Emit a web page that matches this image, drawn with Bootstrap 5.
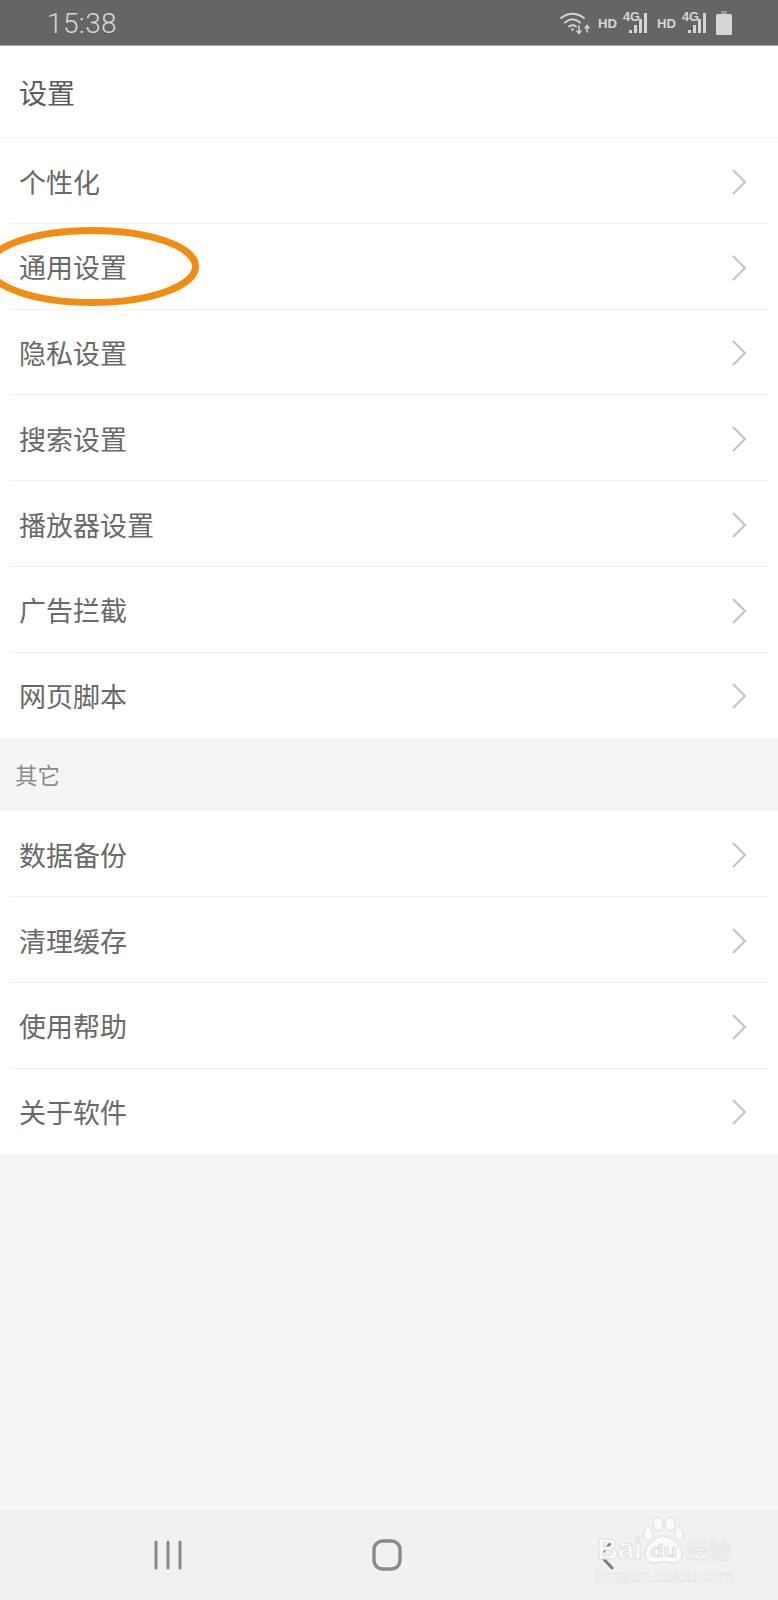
<!DOCTYPE html>
<html lang="zh-CN">
<head>
<meta charset="utf-8">
<title>设置</title>
<link href="https://cdn.jsdelivr.net/npm/bootstrap@5.3.0/dist/css/bootstrap.min.css" rel="stylesheet">
<style>
html,body{height:1600px;margin:0}
body{background:#f5f5f5;font-family:"Noto Sans CJK SC","Liberation Sans",sans-serif;color:#666;width:778px;overflow:hidden;position:relative}
.shell{height:1600px}
.sbar{height:46px;background:#656565;color:#d5d5d5;border-bottom:1px solid #a8a8a8;padding:0 46px 0 47px}
.clock{font-family:Roboto,"Liberation Sans",sans-serif;font-size:28px;font-weight:300;line-height:45px;letter-spacing:.4px;padding-top:2px}
.icons{gap:8px}
.head{height:92px;background:#fff;padding-left:19px;font-size:28px;color:#5c5c5c;border-bottom:1px solid #f5f5f5}
.rows{background:#fff}
.item{height:85.75px;padding:2px 32px 0 19px;font-size:27px;position:relative;color:#696969}
.item+.item::before{content:"";position:absolute;left:9px;right:9px;top:-1px;height:1px;background:#f0f0f0}
.sect{height:73px;padding-left:15px;font-size:22.5px;color:#8c8c8c;background:#f5f5f5}
.grow{flex:1 1 auto}
.navb{height:90px;background:#f1f1f1}
.navgrid{height:90px;padding:0 4px 1px 0}
.cell{width:219px}
.oval{position:absolute;left:-40px;top:226px;width:240px;height:81px;pointer-events:none}
.wm{position:absolute;left:597px;top:1517px;width:140px;height:70px}
.wm1{position:absolute;left:0;top:14px;font-family:"Liberation Sans",sans-serif;font-size:29px;font-weight:700;color:#fafafa;-webkit-text-stroke:.8px #dedede;line-height:36px}
.wm2{position:absolute;left:88px;top:17px;font-size:23px;line-height:30px;color:#fafafa;-webkit-text-stroke:.5px #d8d8d8}
.wm3{position:absolute;left:-2px;top:50px;font-family:"Liberation Sans",sans-serif;font-size:17px;color:#fafafa;-webkit-text-stroke:.4px #d8d8d8;line-height:20px;letter-spacing:.1px;white-space:nowrap}
.paw{position:absolute;left:46px;top:0;width:41px;height:47px}
</style>
</head>
<body>
<div class="shell d-flex flex-column">
  <div class="sbar d-flex justify-content-between align-items-center flex-shrink-0">
    <span class="clock">15:38</span>
    <div class="icons d-flex align-items-center">
      <svg width="30" height="24" viewBox="0 0 30 24" fill="none" stroke="#d5d5d5" stroke-linecap="round">
        <path d="M1 7Q12.500 -1.500 24 7" stroke-width="2"/><path d="M5 11.500Q12.500 5 20 11.500" stroke-width="2"/><path d="M9 15.500Q12.500 13 16 15.500" stroke-width="2"/>
        <circle cx="12.500" cy="18.500" r="1.300" fill="#d5d5d5" stroke="none"/>
        <path d="M19 15v7M17 20l2 2.500 2-2.500M27 21v-6M25 17l2-2.500 2 2.500" stroke-width="1.500"/>
      </svg>
      <svg width="51" height="32" viewBox="0 -4 51 32" fill="#d5d5d5"><text x="0" y="17" font-family="Liberation Sans" font-size="13" font-weight="700" textLength="19" lengthAdjust="spacingAndGlyphs">HD</text><text x="25" y="10" font-family="Liberation Sans" font-size="13" font-weight="700" textLength="17" lengthAdjust="spacingAndGlyphs">4G</text><rect x="31" y="19" width="3" height="3"/><rect x="36" y="14" width="3" height="8"/><rect x="41" y="8" width="3" height="14"/><rect x="46" y="2" width="3" height="20"/></svg>
      <svg width="51" height="32" viewBox="0 -4 51 32" fill="#d5d5d5"><text x="0" y="17" font-family="Liberation Sans" font-size="13" font-weight="700" textLength="19" lengthAdjust="spacingAndGlyphs">HD</text><text x="25" y="10" font-family="Liberation Sans" font-size="13" font-weight="700" textLength="17" lengthAdjust="spacingAndGlyphs">4G</text><rect x="31" y="19" width="3" height="3"/><rect x="36" y="14" width="3" height="8"/><rect x="41" y="8" width="3" height="14"/><rect x="46" y="2" width="3" height="20"/></svg>
      <svg width="16" height="24" viewBox="0 0 16 24"><rect x="5" y="0" width="6" height="4" fill="#9a9a9a"/><rect x="0" y="3" width="16" height="21" rx="1.500" fill="#d5d5d5"/></svg>
    </div>
  </div>
  <div class="head d-flex align-items-center flex-shrink-0">设置</div>
  <div class="rows flex-shrink-0">
    <div class="item d-flex justify-content-between align-items-center"><span>个性化</span><svg width="14" height="26" viewBox="0 0 14 26" fill="none" stroke="#c4c4c4" stroke-width="2"><path d="M1 1l12 12L1 25"/></svg></div>
    <div class="item d-flex justify-content-between align-items-center"><span>通用设置</span><svg width="14" height="26" viewBox="0 0 14 26" fill="none" stroke="#c4c4c4" stroke-width="2"><path d="M1 1l12 12L1 25"/></svg></div>
    <div class="item d-flex justify-content-between align-items-center"><span>隐私设置</span><svg width="14" height="26" viewBox="0 0 14 26" fill="none" stroke="#c4c4c4" stroke-width="2"><path d="M1 1l12 12L1 25"/></svg></div>
    <div class="item d-flex justify-content-between align-items-center"><span>搜索设置</span><svg width="14" height="26" viewBox="0 0 14 26" fill="none" stroke="#c4c4c4" stroke-width="2"><path d="M1 1l12 12L1 25"/></svg></div>
    <div class="item d-flex justify-content-between align-items-center"><span>播放器设置</span><svg width="14" height="26" viewBox="0 0 14 26" fill="none" stroke="#c4c4c4" stroke-width="2"><path d="M1 1l12 12L1 25"/></svg></div>
    <div class="item d-flex justify-content-between align-items-center"><span>广告拦截</span><svg width="14" height="26" viewBox="0 0 14 26" fill="none" stroke="#c4c4c4" stroke-width="2"><path d="M1 1l12 12L1 25"/></svg></div>
    <div class="item d-flex justify-content-between align-items-center"><span>网页脚本</span><svg width="14" height="26" viewBox="0 0 14 26" fill="none" stroke="#c4c4c4" stroke-width="2"><path d="M1 1l12 12L1 25"/></svg></div>
  </div>
  <div class="sect d-flex align-items-center flex-shrink-0">其它</div>
  <div class="rows flex-shrink-0">
    <div class="item d-flex justify-content-between align-items-center"><span>数据备份</span><svg width="14" height="26" viewBox="0 0 14 26" fill="none" stroke="#c4c4c4" stroke-width="2"><path d="M1 1l12 12L1 25"/></svg></div>
    <div class="item d-flex justify-content-between align-items-center"><span>清理缓存</span><svg width="14" height="26" viewBox="0 0 14 26" fill="none" stroke="#c4c4c4" stroke-width="2"><path d="M1 1l12 12L1 25"/></svg></div>
    <div class="item d-flex justify-content-between align-items-center"><span>使用帮助</span><svg width="14" height="26" viewBox="0 0 14 26" fill="none" stroke="#c4c4c4" stroke-width="2"><path d="M1 1l12 12L1 25"/></svg></div>
    <div class="item d-flex justify-content-between align-items-center"><span>关于软件</span><svg width="14" height="26" viewBox="0 0 14 26" fill="none" stroke="#c4c4c4" stroke-width="2"><path d="M1 1l12 12L1 25"/></svg></div>
  </div>
  <div class="grow"></div>
  <div class="navb flex-shrink-0">
    <div class="navgrid d-flex justify-content-center">
      <div class="cell d-flex align-items-center justify-content-center"><svg width="30" height="30" viewBox="0 0 30 30" fill="none" stroke="#8a8a8a" stroke-width="3" stroke-linecap="round"><path d="M3 2v26M15 2v26M27 2v26"/></svg></div>
      <div class="cell d-flex align-items-center justify-content-center"><svg width="30" height="32" viewBox="0 0 30 32" fill="none" stroke="#8a8a8a" stroke-width="3.400"><rect x="2" y="2" width="26" height="28" rx="8.500"/></svg></div>
      <div class="cell d-flex align-items-center justify-content-center"><svg width="18" height="30" viewBox="0 0 18 30" fill="none" stroke="#7c7c7c" stroke-width="3" stroke-linecap="round"><path d="M15 2L3 15l12 13"/></svg></div>
    </div>
  </div>
</div>
<svg class="oval" viewBox="0 0 240 81" fill="none"><ellipse cx="132" cy="40.500" rx="103.500" ry="36" stroke="#f48c12" stroke-width="7"/></svg>
<div class="wm">
  <svg class="paw" viewBox="0 0 41 47" fill="#fafafa" stroke="#dcdcdc" stroke-width="1"><ellipse cx="5" cy="17" rx="4.500" ry="6.500"/><ellipse cx="15" cy="7" rx="5" ry="6.500"/><ellipse cx="27" cy="7" rx="5" ry="6.500"/><ellipse cx="36" cy="17" rx="4.500" ry="6.500"/><path d="M20 19c-7 0-18 10-18 18 0 6 5 9 9 9 4 0 6-1.500 10-1.500s6 1.500 10 1.500c4 0 8-3 8-9 0-8-12-18-19-18z"/><text x="7" y="40" font-family="Liberation Sans" font-size="18" font-weight="700" fill="#f1f1f1" stroke="#d0d0d0" stroke-width=".500" textLength="27" lengthAdjust="spacingAndGlyphs">du</text></svg>
  <span class="wm1">Bai</span>
  <span class="wm2">经验</span>
  <span class="wm3">jingyan.baidu.com</span>
</div>
</body>
</html>
